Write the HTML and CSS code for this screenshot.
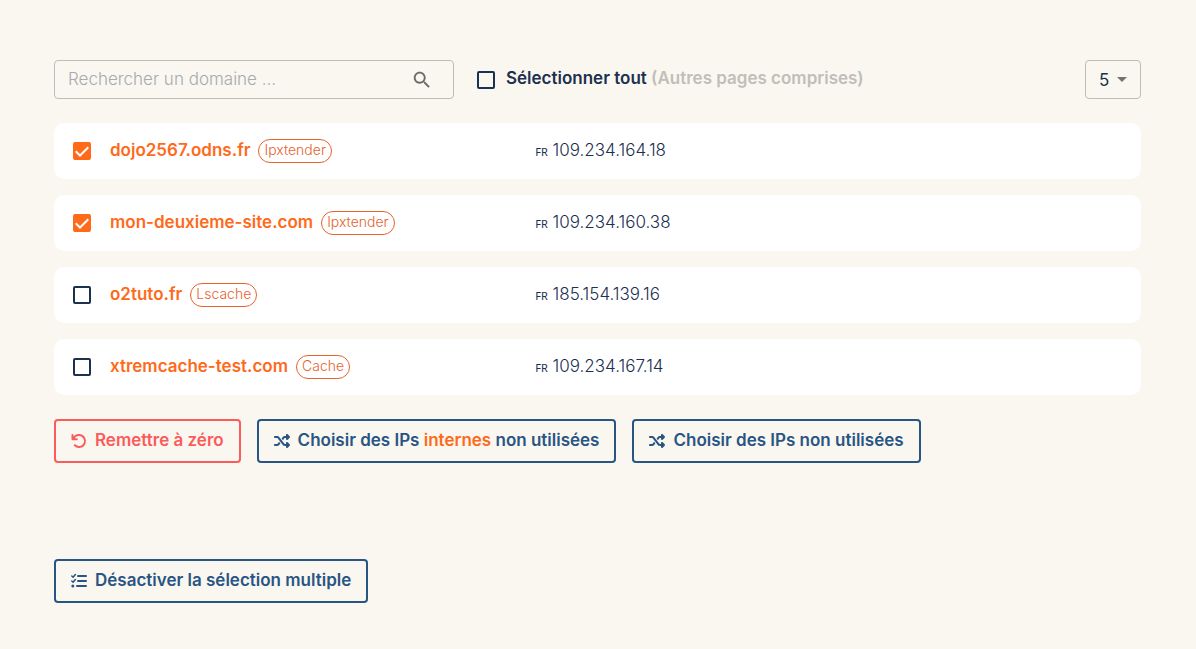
FILE: index.html
```html
<!DOCTYPE html>
<html lang="fr">
<head>
<meta charset="utf-8">
<meta name="viewport" content="width=device-width, initial-scale=1">
<title>Domaines</title>
<link rel="stylesheet" href="styles.css">
</head>
<body>
<svg class="sprite" aria-hidden="true">
  <symbol id="shuffle" viewBox="0 0 512 512"><path fill="currentColor" d="M403.800 34.400c12-5 25.700-2.200 34.900 6.900l64 64c6 6 9.400 14.100 9.400 22.600s-3.400 16.600-9.400 22.600l-64 64c-9.200 9.200-22.900 11.900-34.900 6.900S384 204.900 384 192v-32h-32c-10.100 0-19.600 4.700-25.600 12.800L284 229.300 244 176l31.200-41.600C293.300 110.200 321.800 96 352 96h32V64c0-12.900 7.800-24.600 19.800-29.600zM164 282.700l40 53.300-31.200 41.600C154.700 401.800 126.200 416 96 416H32c-17.700 0-32-14.300-32-32s14.300-32 32-32h64c10.100 0 19.600-4.700 25.600-12.800L164 282.700zM438.600 470.600c-9.200 9.200-22.900 11.900-34.900 6.900S384 460.900 384 448v-32h-32c-30.200 0-58.700-14.200-76.800-38.400L121.600 172.800C115.600 164.700 106.100 160 96 160H32c-17.700 0-32-14.300-32-32s14.300-32 32-32h64c30.200 0 58.700 14.200 76.800 38.400l153.600 204.800c6 8.100 15.500 12.800 25.600 12.800h32v-32c0-12.900 7.800-24.600 19.800-29.600s25.700-2.200 34.900 6.900l64 64c6 6 9.400 14.100 9.400 22.600s-3.400 16.600-9.400 22.600l-64 64z"/></symbol>
</svg>
<main class="page">
  <div class="toolbar">
    <div class="search">
      <input class="search-input" type="search" placeholder="Rechercher un domaine ..." aria-label="Rechercher un domaine">
      <button class="search-button" type="button" aria-label="Rechercher">
        <svg width="22" height="22" viewBox="0 0 24 24"><path fill="currentColor" d="M15.500 14h-.79l-.28-.27C15.410 12.590 16 11.110 16 9.500 16 5.910 13.090 3 9.500 3S3 5.910 3 9.500 5.910 16 9.500 16c1.610 0 3.090-.59 4.230-1.570l.27.28v.79l5 4.990L20.490 19l-4.990-5zm-6 0C7.010 14 5 11.990 5 9.500S7.010 5 9.500 5 14 7.010 14 9.500 11.990 14 9.500 14z"/></svg>
      </button>
    </div>
    <label class="select-all"><input class="check" type="checkbox"><span class="select-all-text">Sélectionner tout <span class="muted">(Autres pages comprises)</span></span></label>
    <select class="page-size" aria-label="Éléments par page"><option>5</option><option>10</option><option>25</option></select>
  </div>

  <ul class="domains">
    <li class="domain"><input class="check" type="checkbox" id="d1" checked><div class="identity"><label class="name" for="d1">dojo2567.odns.fr</label><span class="tag">Ipxtender</span></div><div class="address"><span class="country">FR</span> 109.234.164.18</div></li>
    <li class="domain"><input class="check" type="checkbox" id="d2" checked><div class="identity"><label class="name" for="d2">mon-deuxieme-site.com</label><span class="tag">Ipxtender</span></div><div class="address"><span class="country">FR</span> 109.234.160.38</div></li>
    <li class="domain"><input class="check" type="checkbox" id="d3"><div class="identity"><label class="name" for="d3">o2tuto.fr</label><span class="tag">Lscache</span></div><div class="address"><span class="country">FR</span> 185.154.139.16</div></li>
    <li class="domain"><input class="check" type="checkbox" id="d4"><div class="identity"><label class="name" for="d4">xtremcache-test.com</label><span class="tag">Cache</span></div><div class="address"><span class="country">FR</span> 109.234.167.14</div></li>
  </ul>

  <div class="actions">
    <button class="button danger" type="button">
      <svg class="icon" viewBox="0 0 16 16" fill="none" stroke="currentColor" stroke-width="2" stroke-linecap="round" stroke-linejoin="round"><path d="M1.500 2v4.300h4.300M2 6C3.300 3.300 5.400 2 8 2a6 6 0 1 1-4.200 10.300"/></svg>
      <span>Remettre à zéro</span>
    </button>
    <button class="button" type="button"><svg class="icon"><use href="#shuffle"/></svg><span>Choisir des IPs <span class="accent">internes</span> non utilisées</span></button>
    <button class="button" type="button"><svg class="icon"><use href="#shuffle"/></svg><span>Choisir des IPs non utilisées</span></button>
  </div>

  <div class="footer">
    <button class="button" type="button">
      <svg class="icon" viewBox="0 0 16 16" fill="none" stroke="currentColor" stroke-linecap="round" stroke-linejoin="round"><path stroke-width="1.500" d="M.8 3l1.300 1.200L4.300 1.600M.8 8l1.300 1.200L4.300 6.600"/><path stroke-width="2" d="M7 3h8M7 8h8M6 13h9"/><circle cx="1.800" cy="13" r="1.500" fill="currentColor" stroke="none"/></svg>
      <span>Désactiver la sélection multiple</span>
    </button>
  </div>
</main>
</body>
</html>
```
FILE: styles.css
```css
* { box-sizing: border-box; }

body {
  margin: 0;
  background: #faf7f0;
  color: #1c304f;
  font: 300 17px/24px Inter, "Liberation Sans", sans-serif;
}

button, input, select { font: inherit; color: inherit; }

.sprite { display: none; }

.page { padding: 60px 55px 46px 54px; }

.toolbar {
  display: flex;
  align-items: center;
  margin-bottom: 24px;
}

.search {
  display: flex;
  align-items: center;
  width: 400px;
  height: 39px;
  padding: 0 20px 0 13px;
  border: 1px solid #bfbcb8;
  border-radius: 4px;
}

.search-input {
  flex: 1;
  min-width: 0;
  padding: 0 0 2px;
  border: 0;
  outline: 0;
  background: transparent;
}

.search-input::placeholder { color: #a6abb0; opacity: 1; }

.search-button {
  display: flex;
  padding: 0;
  border: 0;
  background: transparent;
  color: #6c6a68;
}

.select-all {
  display: flex;
  align-items: center;
  gap: 11px;
  margin-left: 23px;
  font-weight: 600;
}

.select-all-text { padding-bottom: 3px; }

.muted { color: #c1beb9; }

.page-size {
  width: 56px;
  height: 39px;
  margin-left: auto;
  padding: 0 0 0 13px;
  border: 1px solid #bfbcb8;
  border-radius: 4px;
  appearance: none;
  font-weight: 400;
  background: url("data:image/svg+xml,%3Csvg xmlns='http://www.w3.org/2000/svg' width='10' height='5'%3E%3Cpath fill='%23757370' d='M0 0h10L5 5z'/%3E%3C/svg%3E") no-repeat right 13px center;
}

.check {
  flex: none;
  width: 18px;
  height: 18px;
  margin: 0;
  border: 2px solid #1c304f;
  border-radius: 2px;
  appearance: none;
}

.check:checked {
  border-color: #ff6a1a;
  background: #ff6a1a url("data:image/svg+xml,%3Csvg xmlns='http://www.w3.org/2000/svg' viewBox='0 0 14 14'%3E%3Cpath fill='none' stroke='white' stroke-width='2' d='M.7 7.300l4.300 4.200 8.300-8.300'/%3E%3C/svg%3E") center / 14px no-repeat;
}

.domains {
  display: grid;
  gap: 16px;
  margin: 0 0 24px;
  padding: 0;
  list-style: none;
}

.domain {
  display: grid;
  grid-template-columns: 18px 11fr 15fr;
  align-items: center;
  min-height: 56px;
  padding-left: 19px;
  border-radius: 10px;
  background: #fff;
}

.identity {
  display: flex;
  align-items: center;
  gap: 8px;
  padding-left: 19px;
}

.name {
  padding-bottom: 2px;
  color: #ff6a1a;
  font-weight: 600;
}

.address { padding-bottom: 2px; }

.tag {
  height: 24px;
  padding: 0 5px;
  border: 1px solid #e8622c;
  border-radius: 12px;
  color: #e8622c;
  font-size: 14px;
  line-height: 20px;
}

.country {
  font: 400 11px "Noto Sans", sans-serif;
}

.actions {
  display: flex;
  flex-wrap: wrap;
  gap: 16px;
}

.button {
  display: inline-flex;
  align-items: center;
  gap: 8px;
  min-height: 44px;
  padding: 7px 15px 8px;
  border: 2px solid currentColor;
  border-radius: 4px;
  background: transparent;
  color: #285584;
  font-weight: 600;
}

.button span { margin-bottom: 1px; }
.danger { color: #fb5b5b; }
.accent { color: #ff6a1a; }
.icon { width: 16px; height: 16px; }

.footer { margin-top: 96px; }
```
